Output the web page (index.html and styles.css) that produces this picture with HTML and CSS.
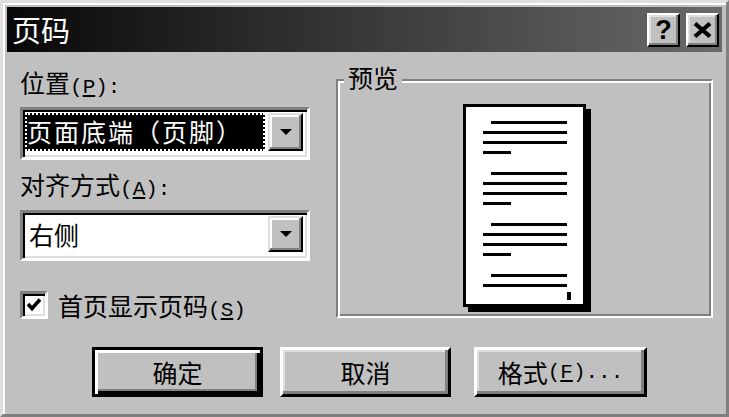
FILE: index.html
```html
<!DOCTYPE html>
<html lang="zh-CN">
<head>
<meta charset="utf-8">
<title>页码</title>
<link rel="stylesheet" href="styles.css">
</head>
<body>
<div class="dialog">
  <div class="titlebar">
    <span class="title">页码</span>
    <div class="caption-btns">
      <div class="cbtn help">?</div>
      <div class="cbtn close">
        <svg width="19" height="16" viewBox="0 0 19 16"><path d="M2 1.5 L17 14.5 M17 1.5 L2 14.5" stroke="#000" stroke-width="4.2" fill="none"/></svg>
      </div>
    </div>
  </div>

  <div class="content">
    <div class="left">
      <div class="label lbl1">位置<span class="hk">(<u>P</u>):</span></div>
      <div class="combo c1">
        <div class="value sel">页面底端（页脚）</div>
        <div class="drop"><svg width="12" height="6" viewBox="0 0 12 6"><polygon points="0,0 12,0 6,6" fill="#000"/></svg></div>
      </div>
      <div class="label lbl2">对齐方式<span class="hk">(<u>A</u>):</span></div>
      <div class="combo c2">
        <div class="value">右侧</div>
        <div class="drop"><svg width="12" height="6" viewBox="0 0 12 6"><polygon points="0,0 12,0 6,6" fill="#000"/></svg></div>
      </div>
      <div class="check-row">
        <span class="checkbox"><svg width="18" height="18" viewBox="0 0 18 18"><polyline points="3,8 7,12.5 15,3.5" stroke="#000" stroke-width="3.6" fill="none"/></svg></span>
        <span class="label">首页显示页码<span class="hk">(<u>S</u>)</span></span>
      </div>
    </div>

    <div class="group">
      <span class="legend">预览</span>
      <div class="page">
        <div class="ln ind"></div>
        <div class="ln"></div>
        <div class="ln"></div>
        <div class="ln short"></div>
        <div class="ln ind para"></div>
        <div class="ln"></div>
        <div class="ln"></div>
        <div class="ln short"></div>
        <div class="ln ind para"></div>
        <div class="ln"></div>
        <div class="ln"></div>
        <div class="ln short"></div>
        <div class="ln ind para"></div>
        <div class="ln"></div>
        <div class="pgnum"></div>
      </div>
    </div>
  </div>

  <div class="buttons">
    <div class="btn default">确定</div>
    <div class="btn b2">取消</div>
    <div class="btn b3">格式<span class="hk">(<u>F</u>)...</span></div>
  </div>
</div>
</body>
</html>
```

FILE: styles.css
```css
* { box-sizing: border-box; margin: 0; padding: 0; }

html, body {
  width: 729px;
  height: 417px;
  overflow: hidden;
  background: #c0c0c0;
}

body {
  font-family: "Noto Sans CJK SC", "Noto Sans", sans-serif;
  font-size: 25px;
  color: #000;
}

.dialog {
  width: 729px;
  height: 417px;
  background: #c0c0c0;
  border: 3px solid;
  border-color: #dfdfdf #808080 #808080 #dfdfdf;
  box-shadow: inset 2px 2px 0 #fff;
  padding: 4px 4px 0 4px;
  display: flex;
  flex-direction: column;
}

/* title bar */
.titlebar {
  height: 45px;
  background: linear-gradient(to right, #080808, #6a6a6a);
  display: flex;
  align-items: center;
  justify-content: space-between;
  padding: 0 3px 0 5px;
}

.title {
  color: #fff;
  font-size: 29px;
  line-height: 45px;
}

.caption-btns {
  display: flex;
  gap: 6px;
  margin-top: 1px;
}

.cbtn {
  width: 33px;
  height: 34px;
  background: #c0c0c0;
  border: 2px solid;
  border-color: #fff #000 #000 #fff;
  box-shadow: inset -2px -2px 0 #808080, inset 2px 2px 0 #dfdfdf;
  display: flex;
  align-items: center;
  justify-content: center;
  font-family: "Liberation Sans", Arial, sans-serif;
  font-weight: bold;
  font-size: 27px;
  line-height: 1;
}

/* content */
.content {
  display: flex;
  padding-left: 13px;
  gap: 26px;
}

.left {
  width: 290px;
  display: flex;
  flex-direction: column;
}

.label {
  height: 30px;
  line-height: 30px;
  white-space: nowrap;
}

.hk {
  font-family: "Liberation Mono", "DejaVu Sans Mono", monospace;
  font-size: 21px;
}

.lbl1 { margin-top: 15px; }
.lbl2 { margin-top: 9px; }

.combo {
  height: 53px;
  margin-top: 10px;
  background: #fff;
  border: 3px solid;
  border-color: #808080 #fff #fff #808080;
  box-shadow: inset 2px 2px 0 #000, inset -2px -2px 0 #dfdfdf;
  display: flex;
  padding: 3px 4px 6px 2px;
}

.c2 {
  margin-top: 11px;
  height: 51px;
}

.value {
  flex: 1;
  line-height: 36px;
  padding-left: 2px;
  white-space: nowrap;
}

.c2 .value {
  padding-left: 4px;
}

.sel {
  background: #000;
  color: #fff;
  border: 2px dotted #fff;
  line-height: 32px;
  letter-spacing: 2px;
  padding-left: 0;
  margin-right: 3px;
}

.drop {
  width: 35px;
  background: #c0c0c0;
  border: 2px solid;
  border-color: #dfdfdf #000 #000 #dfdfdf;
  box-shadow: inset -2px -2px 0 #808080, inset 2px 2px 0 #fff;
  display: flex;
  align-items: center;
  justify-content: center;
}

.check-row {
  margin-top: 30px;
  height: 28px;
  display: flex;
  align-items: center;
  gap: 10px;
}

.checkbox {
  width: 28px;
  height: 28px;
  background: #fff;
  border: 3px solid;
  border-color: #808080 #fff #fff #808080;
  box-shadow: inset 2px 2px 0 #000, inset -2px -2px 0 #dfdfdf;
  display: flex;
  align-items: center;
  justify-content: center;
}

.checkbox svg { display: block; }

/* preview group */
.group {
  position: relative;
  margin-top: 27px;
  width: 377px;
  height: 239px;
  border: 2px solid;
  border-color: #808080 #fff #fff #808080;
  box-shadow: inset 2px 2px 0 #fff, inset -2px -2px 0 #808080;
  display: flex;
  justify-content: center;
  align-items: flex-start;
  padding-top: 23px;
}

.legend {
  position: absolute;
  top: -19px;
  left: 6px;
  padding: 0 4px;
  background: #c0c0c0;
  line-height: 30px;
}

.page {
  width: 123px;
  height: 203px;
  background: #fff;
  border: 3px solid #000;
  box-shadow: 5px 5px 0 #000;
  display: flex;
  flex-direction: column;
  align-items: flex-start;
  padding: 14px 0 0 17px;
}

.ln {
  width: 84px;
  height: 3px;
  background: #000;
  margin-top: 7px;
}

.ln:first-child { margin-top: 0; }
.ln.ind { margin-left: 8px; width: 76px; }
.ln.short { width: 28px; }
.ln.para { margin-top: 18px; }

.pgnum {
  width: 4px;
  height: 8px;
  background: #000;
  margin-top: 5px;
  margin-left: 84px;
}

/* buttons */
.buttons {
  display: flex;
  margin-top: 28px;
  padding-left: 85px;
}

.btn {
  width: 171px;
  height: 50px;
  background: #c0c0c0;
  border: 3px solid;
  border-color: #fff #000 #000 #fff;
  box-shadow: inset -3px -3px 0 #808080, inset 2px 2px 0 #dfdfdf;
  display: flex;
  align-items: center;
  justify-content: center;
  white-space: nowrap;
}

.btn.default {
  border-color: #000;
  box-shadow: inset 3px 3px 0 #fff, inset -3px -3px 0 #000, inset -5px -5px 0 #808080;
}

.b2 { margin-left: 17px; }
.b3 { margin-left: 23px; width: 173px; }
```
